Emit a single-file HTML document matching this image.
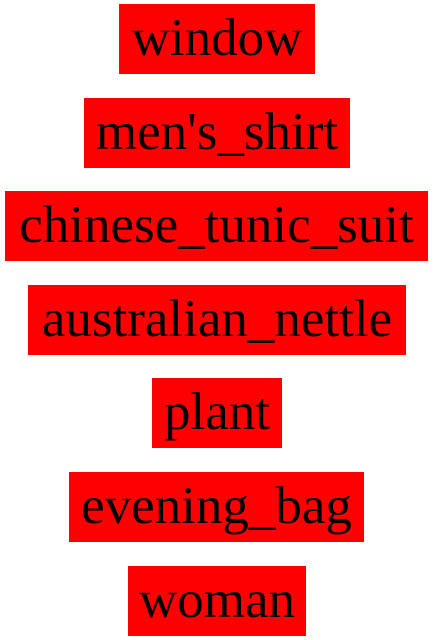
<!DOCTYPE html>
<html><head><meta charset="utf-8"><style>
html,body{margin:0;padding:0;background:#fff;width:435px;height:640px;overflow:hidden}
.b{position:absolute;height:70px;background:#ff0000;color:#000;font-family:"Liberation Serif",serif;font-size:53px;line-height:68px;text-align:center;white-space:nowrap}
</style></head><body>
<div class="b" style="left:119px;top:4px;width:196px">window</div>
<div class="b" style="left:84px;top:98px;width:266px">men's_shirt</div>
<div class="b" style="left:5px;top:191px;width:423px">chinese_tunic_suit</div>
<div class="b" style="left:28px;top:285px;width:378px">australian_nettle</div>
<div class="b" style="left:152px;top:378px;width:130px">plant</div>
<div class="b" style="left:69px;top:472px;width:295px">evening_bag</div>
<div class="b" style="left:128px;top:566px;width:178px">woman</div>
</body></html>
